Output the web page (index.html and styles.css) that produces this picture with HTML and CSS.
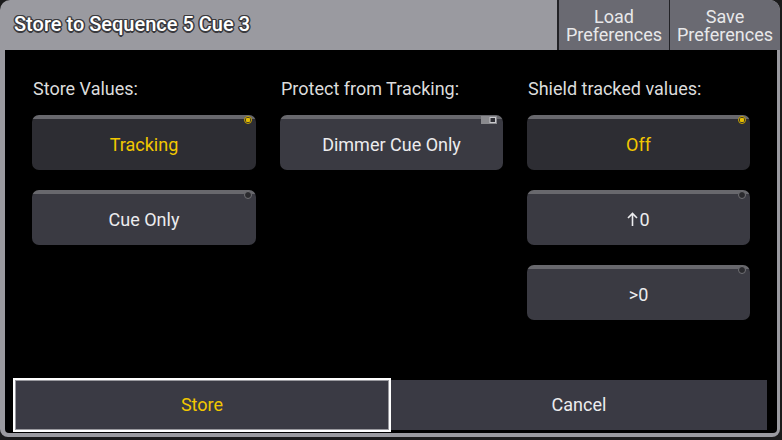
FILE: index.html
```html
<!DOCTYPE html>
<html>
<head>
<meta charset="utf-8">
<link rel="stylesheet" href="styles.css">
</head>
<body>
<div class="dialog">
  <div class="header">
    <div class="title">Store to Sequence 5 Cue 3</div>
    <div class="hbtn load"><span>Load</span><span>Preferences</span></div>
    <div class="hbtn save"><span>Save</span><span>Preferences</span></div>
  </div>
  <div class="content">
    <div class="columns">
      <div class="col">
        <div class="label">Store Values:</div>
        <div class="opt sel"><span class="dot on"></span>Tracking</div>
        <div class="opt"><span class="dot"></span>Cue Only</div>
      </div>
      <div class="col">
        <div class="label">Protect from Tracking:</div>
        <div class="opt">
          <svg class="toggle" width="16" height="8" viewBox="0 0 16 8"><rect x="0.5" y="0.5" width="15" height="7" fill="#8a8a8e" stroke="#8a8a8e"/><rect x="9" y="1.5" width="5.5" height="5" fill="#2e2e34" stroke="#c8c8cc" stroke-width="1"/></svg>
          Dimmer Cue Only</div>
      </div>
      <div class="col">
        <div class="label">Shield tracked values:</div>
        <div class="opt sel"><span class="dot on"></span>Off</div>
        <div class="opt"><span class="dot"></span><svg class="arrow" width="11" height="14" viewBox="0 0 11 14"><path d="M5.5 14V1.5M1 6L5.5 1.5L10 6" fill="none" stroke="#ececee" stroke-width="1.6"/></svg>0</div>
        <div class="opt"><span class="dot"></span>&gt;0</div>
      </div>
    </div>
    <div class="actions">
      <div class="act store">Store</div>
      <div class="act cancel">Cancel</div>
    </div>
  </div>
</div>
</body>
</html>
```
FILE: styles.css
```css
html, body {
  margin: 0;
  padding: 0;
}
body {
  width: 782px;
  height: 440px;
  overflow: hidden;
  background: #1b1b1c;
  font-family: Roboto, "Liberation Sans", sans-serif;
}
.dialog {
  width: 780px;
  height: 437px;
  background: #9a9aa0;
  border-radius: 10px 10px 8px 8px;
  overflow: hidden;
  display: flex;
  flex-direction: column;
}
.header {
  height: 50px;
  display: flex;
  flex: none;
}
.title {
  flex: 1;
  padding-left: 14px;
  padding-top: 11px;
  box-sizing: border-box;
  font-size: 20px;
  font-weight: 500;
  color: #fff;
  line-height: 26px;
  text-shadow: -1px -1px 0 #3a3a3e, 1px -1px 0 #3a3a3e, -1px 1px 0 #3a3a3e, 1px 1px 0 #3a3a3e, 0 -1.5px 0 #3a3a3e, 0 1.5px 0 #3a3a3e, -1.5px 0 0 #3a3a3e, 1.5px 0 0 #3a3a3e;
}
.hbtn {
  background: #6a6a72;
  color: #e8e8ea;
  font-size: 18px;
  line-height: 18px;
  text-align: center;
  display: flex;
  flex-direction: column;
  align-items: center;
  justify-content: center;
  padding-top: 1px;
  box-sizing: border-box;
}
.load {
  width: 112px;
  border-left: 2px solid #222226;
}
.save {
  width: 111px;
  border-left: 1px solid #222226;
  border-top-right-radius: 10px;
}
.content {
  flex: 1;
  background: #000;
  margin: 0 3px 4px 5px;
  border-radius: 0 0 4px 4px;
  display: flex;
  flex-direction: column;
  padding: 28px 10px 1px 8px;
}
.columns {
  display: grid;
  grid-template-columns: 224px 223px 223px;
  column-gap: 24px;
  padding-left: 19px;
}
.col {
  display: flex;
  flex-direction: column;
  gap: 20px;
}
.label {
  height: 22px;
  line-height: 22px;
  margin-bottom: -5px;
  color: #dcdcdc;
  font-size: 18px;
  padding-left: 1px;
}
.opt {
  position: relative;
  height: 55px;
  box-sizing: border-box;
  padding-top: 4px;
  border-radius: 7px;
  background: linear-gradient(#68686d 0, #68686d 4px, #3a3a42 4px);
  color: #ececee;
  font-size: 18px;
  display: flex;
  align-items: center;
  justify-content: center;
}
.opt.sel {
  background: linear-gradient(#68686d 0, #68686d 4px, #2d2d33 4px);
  color: #f2c700;
}
.arrow {
  margin-right: 1px;
  margin-bottom: 1px;
}
.dot {
  position: absolute;
  top: 1px;
  right: 4px;
  width: 8px;
  height: 8px;
  box-sizing: border-box;
  border-radius: 50%;
  border: 1.5px solid #707074;
  background: #2a2a2e;
}
.dot.on {
  border-color: #c9a400;
  background: radial-gradient(circle, #e6bd00 0, #e6bd00 2px, #2d2d33 2.5px);
}
.toggle {
  position: absolute;
  top: 1px;
  right: 6px;
}
.actions {
  margin-top: auto;
  display: flex;
  align-items: center;
  height: 55px;
}
.act {
  display: flex;
  align-items: center;
  justify-content: center;
  font-size: 18px;
  background: #3a3a44;
}
.store {
  width: 378px;
  height: 54px;
  box-sizing: border-box;
  border: 2px solid #fff;
  box-shadow: inset 0 0 0 1px #9a9aa0;
  color: #f2c700;
}
.cancel {
  flex: 1;
  height: 50px;
  color: #ececee;
}
```
